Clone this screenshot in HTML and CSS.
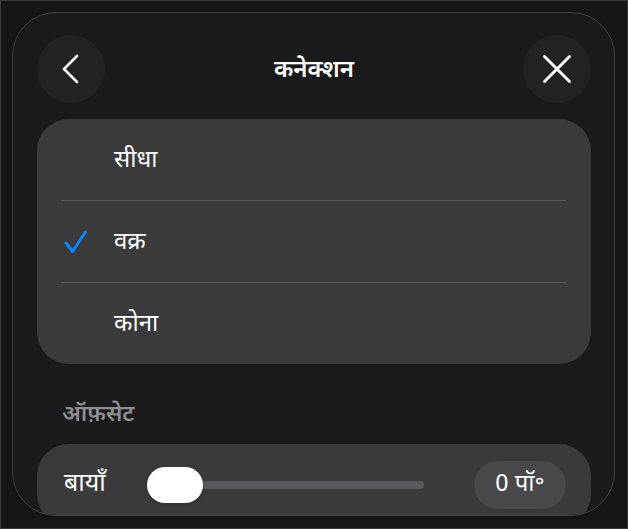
FILE: index.html
```html
<!DOCTYPE html>
<html lang="hi">
<head>
<meta charset="utf-8">
<link rel="stylesheet" href="styles.css">
</head>
<body>
<div class="frame">
  <div class="panel">
    <div class="header">
      <div class="round-btn">
        <svg width="30" height="30" viewBox="0 0 30 30"><path d="M21 2 L8 15 L21 28" fill="none" stroke="#fff" stroke-width="2.6" stroke-linecap="round" stroke-linejoin="round"/></svg>
      </div>
      <div class="title">कनेक्शन</div>
      <div class="round-btn">
        <svg width="30" height="30" viewBox="0 0 30 30"><path d="M2.5 2.5 L27.5 27.5 M27.5 2.5 L2.5 27.5" fill="none" stroke="#fff" stroke-width="3" stroke-linecap="round"/></svg>
      </div>
    </div>
    <div class="card list">
      <div class="row"><span class="check"></span><span class="row-text">सीधा</span></div>
      <div class="sep"></div>
      <div class="row"><span class="check"><svg width="24" height="24" viewBox="0 0 24 24"><path d="M2 13 L8.5 21.5 L21.5 2" fill="none" stroke="#0a84ff" stroke-width="3" stroke-linecap="round" stroke-linejoin="round"/></svg></span><span class="row-text">वक्र</span></div>
      <div class="sep"></div>
      <div class="row"><span class="check"></span><span class="row-text">कोना</span></div>
    </div>
    <div class="section-label">ऑफ़सेट</div>
    <div class="card slider-card">
      <div class="slider-label">बायाँ</div>
      <div class="track">
        <div class="bar"></div>
        <div class="thumb"></div>
      </div>
      <div class="value">0 पॉ॰</div>
    </div>
  </div>
</div>
</body>
</html>
```
FILE: styles.css
```css
html, body {
  margin: 0;
  padding: 0;
  background: #151517;
}
body {
  font-family: "Noto Sans Devanagari", "Noto Sans", "Lohit Devanagari", sans-serif;
  color: #fff;
}
.frame {
  width: 628px;
  height: 529px;
  box-sizing: border-box;
  border: 1px solid #3a3a3c;
  background: #151517;
  padding: 11px 12px 0 11px;
  overflow: hidden;
}
.panel {
  width: 603px;
  height: 504px;
  box-sizing: border-box;
  border: 1px solid #404043;
  border-radius: 44px;
  background: #1a1a1c;
  overflow: hidden;
  padding: 22px 23px 0 24px;
}
.header {
  height: 68px;
  display: flex;
  align-items: center;
  justify-content: space-between;
  margin-bottom: 16px;
}
.round-btn {
  width: 68px;
  height: 68px;
  border-radius: 50%;
  background: #222224;
  display: flex;
  align-items: center;
  justify-content: center;
}
.title {
  font-size: 24px;
  font-weight: 600;
  line-height: 32px;
  padding-top: 3px;
}
.card {
  background: #3a3a3c;
  border-radius: 32px;
}
.list {
  display: flex;
  flex-direction: column;
}
.row {
  height: 81px;
  display: flex;
  align-items: center;
  padding-left: 27px;
}
.check {
  width: 50px;
  height: 24px;
  display: flex;
  align-items: center;
}
.row-text {
  font-size: 24px;
  line-height: 32px;
  padding-top: 3px;
}
.sep {
  height: 1px;
  background: #58585b;
  margin: 0 25px 0 24px;
}
.section-label {
  padding: 38px 0 0 25px;
  height: 26px;
  line-height: 26px;
  font-size: 23px;
  font-weight: 600;
  color: #8e8e93;
  margin-bottom: 16px;
}
.slider-card {
  height: 82px;
  display: flex;
  align-items: center;
  padding: 0 25px 0 27px;
}
.slider-label {
  flex: 0 0 83px;
  font-size: 25px;
  line-height: 32px;
}
.track {
  flex: 1;
  position: relative;
  height: 36px;
  display: flex;
  align-items: center;
}
.bar {
  width: 100%;
  height: 8px;
  border-radius: 4px;
  background: #59595d;
}
.thumb {
  position: absolute;
  left: 0;
  top: 0;
  width: 56px;
  height: 36px;
  border-radius: 18px;
  background: #fff;
  box-shadow: 0 1px 4px rgba(0,0,0,0.25);
}
.value {
  margin-left: 50px;
  width: 92px;
  height: 48px;
  border-radius: 24px;
  background: #48484a;
  display: flex;
  align-items: center;
  justify-content: center;
  font-size: 24px;
}
```
